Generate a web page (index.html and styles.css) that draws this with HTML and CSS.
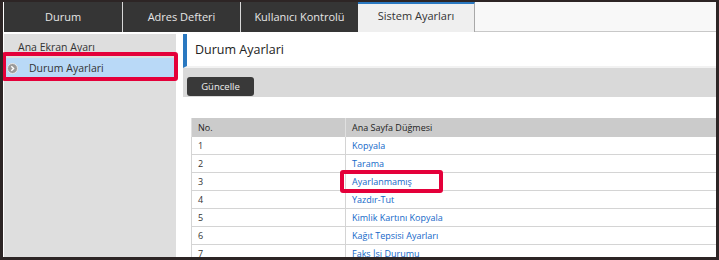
FILE: index.html
```html
<!DOCTYPE html>
<html>
<head>
<meta charset="utf-8">
<title>Sistem Ayarları</title>
<link rel="stylesheet" href="styles.css">
</head>
<body>
<div class="frame">
  <div class="tabs">
    <div class="tab">Durum</div>
    <div class="tab">Adres Defteri</div>
    <div class="tab">Kullanıcı Kontrolü</div>
    <div class="tab active">Sistem Ayarları</div>
    <div class="tab-rest"></div>
  </div>
  <div class="main">
    <div class="side">
      <div class="side-item">Ana Ekran Ayarı</div>
      <div class="side-item selected">
        <svg class="side-icon" width="11" height="11" viewBox="0 0 11 11">
          <circle cx="5.5" cy="5.5" r="5" fill="#9a9a9a" stroke="#e8e8e8" stroke-width="1"/>
          <path d="M4.3 3.2 L6.6 5.5 L4.3 7.8" fill="none" stroke="#fff" stroke-width="1.4"/>
        </svg>
        Durum Ayarlari
      </div>
      <div class="mark mark-side"></div>
    </div>
    <div class="content">
      <div class="head">Durum Ayarlari</div>
      <div class="toolbar"><button class="btn">Güncelle</button></div>
      <div class="table-wrap">
        <table class="list">
          <tr><th class="c-no">No.</th><th>Ana Sayfa Düğmesi</th></tr>
          <tr><td>1</td><td><a href="#">Kopyala</a></td></tr>
          <tr><td>2</td><td><a href="#">Tarama</a></td></tr>
          <tr><td>3</td><td><a href="#">Ayarlanmamış</a></td></tr>
          <tr><td>4</td><td><a href="#">Yazdır-Tut</a></td></tr>
          <tr><td>5</td><td><a href="#">Kimlik Kartını Kopyala</a></td></tr>
          <tr><td>6</td><td><a href="#">Kağıt Tepsisi Ayarları</a></td></tr>
          <tr><td>7</td><td><a href="#">Faks İşi Durumu</a></td></tr>
        </table>
        <div class="mark mark-row"></div>
      </div>
    </div>
  </div>
</div>
</body>
</html>
```

FILE: styles.css
```css
html, body {
margin: 0;
padding: 0;
background: #fff;
}
body {
font-family: "Open Sans", "Noto Sans", sans-serif;
color: #333;
}
.frame {
width: 719px;
height: 260px;
box-sizing: border-box;
border: 3px solid #2d2525;
border-top-width: 2px;
padding-left: 1px;
overflow: hidden;
background: #fff;
}
.tabs {
display: flex;
height: 30px;
}
.tab {
width: 117px;
background: #353535;
color: #e6e6e6;
font-size: 11px;
text-align: center;
line-height: 29px;
border-left: 1px solid #d8d8d8;
}
.tab:first-child {
border-left: none;
width: 118px;
}
.tab.active {
background: #efefef;
color: #333;
border-top: 2px solid #2a78c0;
border-left: none;
border-right: 1px solid #a8a8a8;
line-height: 24px;
width: 116px;
}
.tab-rest {
flex: 1;
background: #f8f8f8;
border-bottom: 1px solid #c8c8c8;
}
.main {
display: flex;
margin-top: 2px;
height: 230px;
}
.side {
position: relative;
width: 172px;
background: #dedede;
padding-top: 3px;
}
.side-item {
height: 21px;
line-height: 21px;
font-size: 10.5px;
color: #333;
padding-left: 14px;
}
.side-item.selected {
background: #b9d9f7;
padding-left: 3px;
display: flex;
align-items: center;
}
.side-icon {
margin-right: 11px;
}
.mark {
position: absolute;
border: 4px solid #e4003a;
border-radius: 3px;
}
.mark-side {
left: -2px;
top: 18px;
width: 168px;
height: 21px;
}
.content {
flex: 1;
margin-left: 7px;
overflow: hidden;
}
.head {
height: 32px;
border-left: 4px solid #2a78c0;
font-size: 12.5px;
line-height: 32px;
padding-left: 8px;
color: #222;
border-bottom: 2px solid #f2f2f2;
}
.toolbar {
background: #d9d9d9;
height: 29px;
padding: 5px 0 0 4px;
box-sizing: border-box;
}
.btn {
width: 67px;
height: 19px;
border: none;
border-radius: 3px;
background: #393939;
color: #eee;
font-family: inherit;
font-size: 9.5px;
padding: 0;
}
.table-wrap {
position: relative;
padding: 21px 0 0 8px;
}
.list {
border-collapse: collapse;
width: 560px;
font-size: 9px;
}
.list th {
background: #cbcbcb;
font-weight: normal;
text-align: left;
height: 19px;
padding: 0 0 0 6px;
color: #222;
border-left: 1px solid #e0e0e0;
}
.list td {
height: 17px;
padding: 0 0 0 6px;
border-bottom: 1px solid #d4d4d4;
border-left: 1px solid #d4d4d4;
}
.list .c-no {
width: 147px;
}
.list a {
color: #1468c8;
text-decoration: none;
}
.mark-row {
left: 157px;
top: 73px;
width: 95px;
height: 15px;
}
```
